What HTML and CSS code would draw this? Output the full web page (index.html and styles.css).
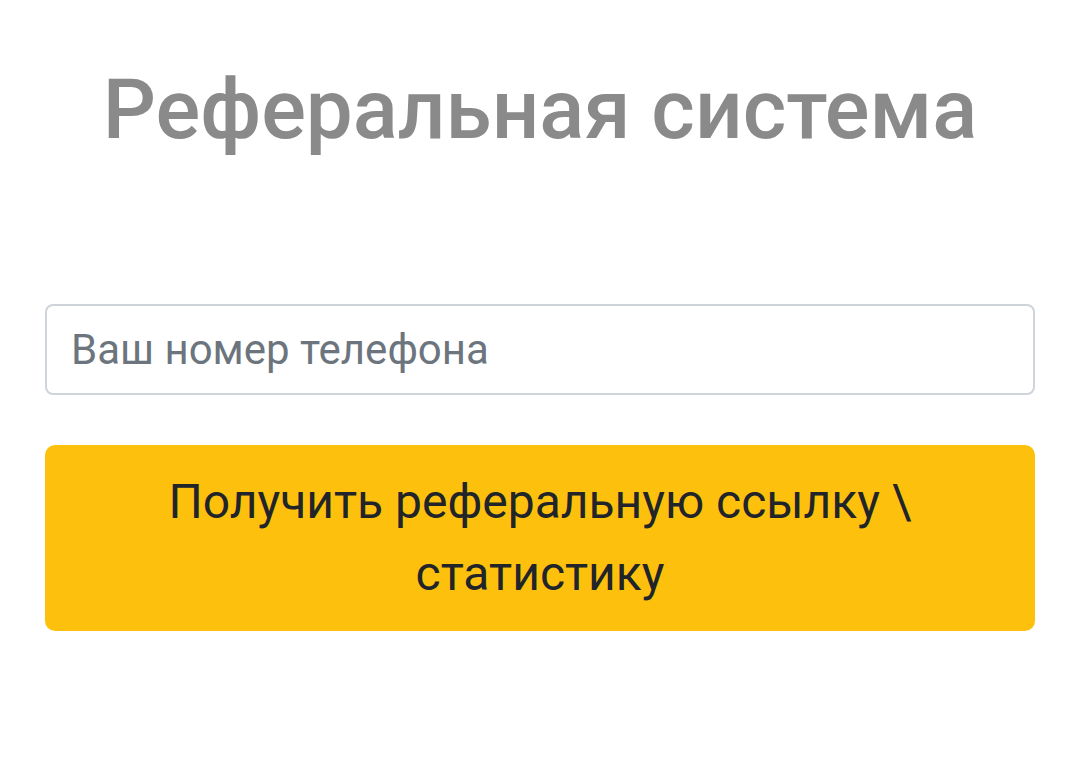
FILE: index.html
```html
<!DOCTYPE html>
<html lang="ru">
<head>
<meta charset="utf-8">
<link rel="stylesheet" href="styles.css">
</head>
<body>
<main class="page">
  <h1 class="title">Реферальная система</h1>
  <form class="form">
    <input class="phone" type="text" placeholder="Ваш номер телефона">
    <button class="submit" type="button">Получить реферальную ссылку \ статистику</button>
  </form>
</main>
</body>
</html>
```
FILE: styles.css
```css
html, body {
  margin: 0;
  padding: 0;
  background: #ffffff;
  font-family: Roboto, "Noto Sans", sans-serif;
}
.page {
  width: 1080px;
  height: 760px;
  box-sizing: border-box;
  padding: 60px 45px 0 45px;
  display: flex;
  flex-direction: column;
}
.title {
  margin: 0;
  text-align: center;
  font-size: 83.5px;
  font-weight: 500;
  color: #8a8a8a;
  line-height: 100px;
}
.form {
  margin-top: 144px;
  display: flex;
  flex-direction: column;
  gap: 50px;
}
.phone {
  height: 91px;
  box-sizing: border-box;
  border: 2px solid #ced4da;
  border-radius: 8px;
  padding: 0 24px;
  font-family: Roboto, sans-serif;
  font-size: 42px;
  color: #495057;
  outline: none;
}
.phone::placeholder {
  color: #6c757d;
}
.submit {
  height: 186px;
  box-sizing: border-box;
  border: none;
  border-radius: 10px;
  background: #fdc10d;
  color: #212529;
  font-family: Roboto, sans-serif;
  font-size: 48px;
  line-height: 72px;
  padding: 21px 20px;
  text-align: center;
}
```
